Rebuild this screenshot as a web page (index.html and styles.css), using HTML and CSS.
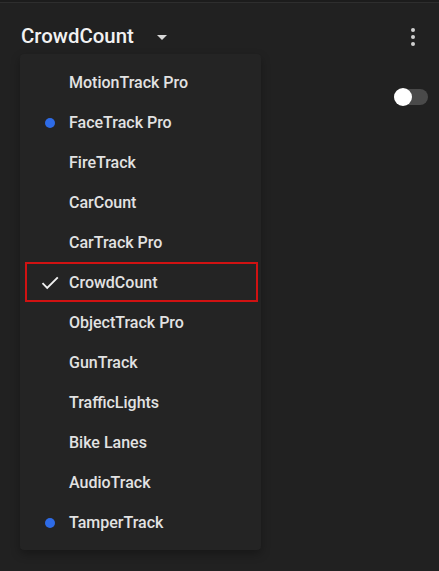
FILE: index.html
```html
<!DOCTYPE html>
<html>
<head>
<meta charset="utf-8">
<link rel="stylesheet" href="styles.css">
</head>
<body>
<div class="app">
  <div class="topline"></div>
  <header class="header">
    <div class="title-wrap">
      <span class="title">CrowdCount</span>
      <span class="caret"></span>
    </div>
    <div class="kebab"><i></i><i></i><i></i></div>
  </header>
  <main class="content">
    <div class="row-toggle">
      <div class="toggle"><span class="thumb"></span></div>
    </div>
  </main>
  <ul class="menu">
    <li class="item"><span class="mark"></span><span class="label">MotionTrack Pro</span></li>
    <li class="item"><span class="mark"><span class="dot"></span></span><span class="label">FaceTrack Pro</span></li>
    <li class="item"><span class="mark"></span><span class="label">FireTrack</span></li>
    <li class="item"><span class="mark"></span><span class="label">CarCount</span></li>
    <li class="item"><span class="mark"></span><span class="label">CarTrack Pro</span></li>
    <li class="item selected"><span class="mark"><svg class="check" viewBox="0 0 18 14" width="18" height="14"><path d="M1.5 7.2 L6.2 11.9 L16.8 1.3" fill="none" stroke="#f0f0f0" stroke-width="1.9"/></svg></span><span class="label">CrowdCount</span></li>
    <li class="item"><span class="mark"></span><span class="label">ObjectTrack Pro</span></li>
    <li class="item"><span class="mark"></span><span class="label">GunTrack</span></li>
    <li class="item"><span class="mark"></span><span class="label">TrafficLights</span></li>
    <li class="item"><span class="mark"></span><span class="label">Bike Lanes</span></li>
    <li class="item"><span class="mark"></span><span class="label">AudioTrack</span></li>
    <li class="item"><span class="mark"><span class="dot"></span></span><span class="label">TamperTrack</span></li>
  </ul>
</div>
</body>
</html>
```
FILE: styles.css
```css
* { box-sizing: border-box; }
html, body {
  margin: 0;
  padding: 0;
  background: #212121;
  font-family: Roboto, "Liberation Sans", sans-serif;
}
.app {
  position: relative;
  width: 439px;
  height: 571px;
  overflow: hidden;
}
.topline {
  height: 3px;
  border-bottom: 1px solid #2e2e2e;
  background: #1c1c1c;
}
.header {
  height: 72px;
  display: flex;
  align-items: center;
  justify-content: space-between;
  padding: 0 24px 0 21px;
  margin-top: -3px;
}
.title-wrap {
  display: flex;
  align-items: center;
}
.title {
  color: #f2f2f2;
  font-size: 20.4px;
  font-weight: 500;
}
.caret {
  margin-left: 23px;
  width: 0;
  height: 0;
  border-left: 5px solid transparent;
  border-right: 5px solid transparent;
  border-top: 5px solid #d8d8d8;
  margin-top: 2px;
}
.kebab {
  display: flex;
  flex-direction: column;
  gap: 3px;
  padding-top: 1px;
}
.kebab i {
  display: block;
  width: 4px;
  height: 4px;
  border-radius: 50%;
  background: #d0d0d0;
}
.content {
  padding: 17px 11px 0 0;
}
.row-toggle {
  display: flex;
  justify-content: flex-end;
}
.toggle {
  width: 34px;
  height: 16px;
  border-radius: 8px;
  background: #4a4a4a;
  position: relative;
}
.thumb {
  position: absolute;
  left: 0;
  top: -1px;
  width: 18px;
  height: 18px;
  border-radius: 50%;
  background: #ffffff;
}
.menu {
  position: absolute;
  left: 20px;
  top: 54px;
  width: 241px;
  margin: 0;
  padding: 8px 0;
  list-style: none;
  background: #242424;
  border-radius: 4px;
  box-shadow: 0 4px 10px rgba(0,0,0,0.3);
}
.item {
  height: 40px;
  display: flex;
  align-items: center;
  margin: 0 3px 0 5px;
  border: 2px solid transparent;
  padding-top: 1px;
}
.item.selected {
  border-color: #d01212;
}
.mark {
  width: 42px;
  display: flex;
  align-items: center;
  justify-content: center;
  padding-left: 4px;
}
.dot {
  width: 10px;
  height: 10px;
  border-radius: 50%;
  background: #2e6be6;
}
.check { display: block; }
.label {
  color: #e2e2e2;
  font-size: 16px;
  font-weight: 500;
}
```
